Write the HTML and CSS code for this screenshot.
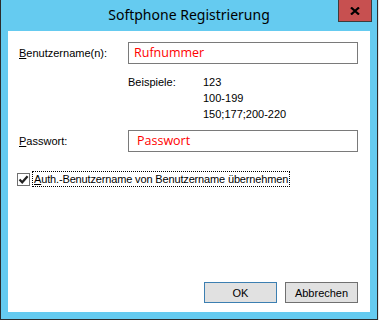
FILE: index.html
```html
<!DOCTYPE html>
<html>
<head>
<meta charset="utf-8">
<link rel="stylesheet" href="styles.css">
</head>
<body>
<div class="window">
  <div class="titlebar">
    <div class="spacer"></div>
    <div class="title">Softphone Registrierung</div>
    <div class="close">
      <svg width="10" height="8" viewBox="0 0 10 8"><path d="M1 0.5 L9 7.5 M9 0.5 L1 7.5" stroke="#000" stroke-width="2.2" fill="none"/></svg>
    </div>
  </div>
  <div class="client">
    <div class="row">
      <div class="label"><u>B</u>enutzername(n):</div>
      <div class="input">Rufnummer</div>
    </div>
    <div class="examples">
      <div class="ex-label">Beispiele:</div>
      <div class="ex-values">
        <div>123</div>
        <div>100-199</div>
        <div>150;177;200-220</div>
      </div>
    </div>
    <div class="row row-pass">
      <div class="label"><u>P</u>asswort:</div>
      <div class="input input-pass">Passwort</div>
    </div>
    <div class="check-row">
      <div class="checkbox">
        <svg width="11" height="11" viewBox="0 0 11 11"><path d="M1.5 5.5 L4.2 8.3 L9.6 2.2" stroke="#222" stroke-width="2.2" fill="none"/></svg>
      </div>
      <div class="check-label"><u>A</u>uth.-Benutzername von Benutzername übernehmen</div>
    </div>
    <div class="buttons">
      <div class="btn btn-default">OK</div>
      <div class="btn">Abbrechen</div>
    </div>
  </div>
</div>
</body>
</html>
```
FILE: styles.css
```css
html, body {
  margin: 0;
  padding: 0;
}
body {
  width: 379px;
  height: 320px;
  background: #e8e8e8;
  overflow: hidden;
  font-family: "Liberation Sans", Arial, sans-serif;
  font-size: 11px;
  color: #000;
}
.window {
  width: 378px;
  height: 320px;
  box-sizing: border-box;
  border: 1px solid #2b2b2b;
  border-top: none;
  background: #65cbf0;
  display: flex;
  flex-direction: column;
}
.titlebar {
  height: 31px;
  display: grid;
  grid-template-columns: 1fr auto 1fr;
  align-items: start;
}
.title {
  font-family: "Noto Sans", "Open Sans", sans-serif;
  font-size: 14px;
  line-height: 30px;
  color: #000;
  white-space: nowrap;
}
.close {
  justify-self: end;
  margin-right: 5px;
  width: 34px;
  height: 22px;
  box-sizing: border-box;
  background: #c75050;
  border: 1px solid #3c3c3c;
  border-top: none;
  display: flex;
  align-items: center;
  justify-content: center;
}
.client {
  margin: 0 7px 7px 7px;
  flex: 1;
  background: #fff;
  box-sizing: border-box;
  padding: 11px 12px 9px 11px;
  display: flex;
  flex-direction: column;
}
.row {
  display: flex;
  align-items: center;
  height: 22px;
}
.label {
  width: 109px;
}
.input {
  width: 230px;
  height: 22px;
  box-sizing: border-box;
  border: 1px solid #7a7a7a;
  color: #ff0000;
  font-family: "Open Sans", "Noto Sans", sans-serif;
  font-size: 12.5px;
  line-height: 20px;
  padding-left: 5px;
}
.input-pass {
  padding-left: 8px;
}
.examples {
  display: flex;
  margin-top: 10px;
  margin-left: 109px;
  line-height: 16px;
}
.ex-label {
  width: 75px;
}
.row-pass {
  margin-top: 8px;
}
.check-row {
  display: flex;
  align-items: center;
  margin-top: 19px;
  margin-left: -2px;
  height: 16px;
}
.checkbox {
  width: 13px;
  height: 13px;
  box-sizing: border-box;
  border: 1px solid #707070;
  display: flex;
  align-items: center;
  justify-content: center;
  margin-right: 2px;
}
.check-label {
  border: 1px dotted #000;
  padding: 0 1px;
  line-height: 14px;
  letter-spacing: -0.15px;
  white-space: nowrap;
}
.buttons {
  margin-top: auto;
  display: flex;
  justify-content: flex-end;
  gap: 8px;
}
.btn {
  width: 73px;
  height: 21px;
  box-sizing: border-box;
  border: 1px solid #707070;
  background: #e1e1e1;
  display: flex;
  align-items: center;
  justify-content: center;
}
.btn-default {
  border-color: #3c7fb1;
}
```
